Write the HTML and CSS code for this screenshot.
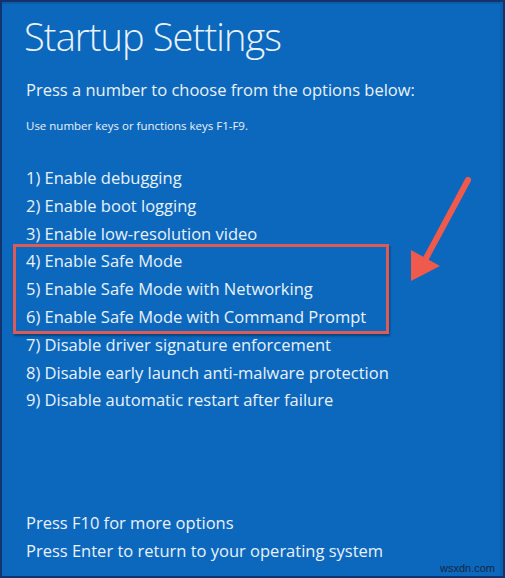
FILE: index.html
```html
<!DOCTYPE html>
<html lang="en">
<head>
    <meta charset="UTF-8">
    <title>Startup Settings</title>
    <link rel="stylesheet" href="styles.css">
</head>
<body>
    <div class="screen">
        <h1 class="title">Startup Settings</h1>
        <p class="lead">Press a number to choose from the options below:</p>
        <p class="hint">Use number keys or functions keys F1-F9.</p>

        <ul class="options">
            <li>1) Enable debugging</li>
            <li>2) Enable boot logging</li>
            <li>3) Enable low-resolution video</li>
            <li class="highlight">
                <ul class="options">
                    <li>4) Enable Safe Mode</li>
                    <li>5) Enable Safe Mode with Networking</li>
                    <li>6) Enable Safe Mode with Command Prompt</li>
                </ul>
            </li>
            <li>7) Disable driver signature enforcement</li>
            <li>8) Disable early launch anti-malware protection</li>
            <li>9) Disable automatic restart after failure</li>
        </ul>

        <div class="footer">
            <p>Press F10 for more options</p>
            <p>Press Enter to return to your operating system</p>
        </div>

        <!-- annotation arrow -->
        <svg class="arrow" width="80" height="120" viewBox="0 0 80 120">
            <line x1="66" y1="8" x2="22" y2="90" stroke="#ef5a4c" stroke-width="6" stroke-linecap="round"/>
            <polygon points="9,109 9,78 38,94" fill="#ef5a4c"/>
        </svg>

        <span class="watermark">wsxdn.com</span>
    </div>
</body>
</html>
```

FILE: styles.css
```css
/* General */
html, body {
    margin: 0;
    padding: 0;
}

body {
    width: 505px;
    height: 578px;
    font-family: 'Open Sans', 'Noto Sans', sans-serif;
    color: #eaf2fb;
}

.screen {
    position: relative;
    box-sizing: border-box;
    width: 505px;
    height: 578px;
    background-color: #0b68bd;
    border: 2px solid #14336e;
    box-shadow: inset -3px 0 0 #0a5fae, inset 0 2px 0 #0d5aa6;
    padding: 6px 22px 12px 22px;
    display: flex;
    flex-direction: column;
}

/* Heading */
.title {
    margin: 0;
    font-size: 38px;
    font-weight: 300;
    letter-spacing: -0.9px;
    line-height: 56px;
}

.lead {
    margin: 14px 0 0 2px;
    font-size: 16.5px;
    line-height: 24px;
}

.hint {
    margin: 16px 0 0 2px;
    font-size: 11.5px;
    line-height: 16px;
}

/* Options list */
.options {
    list-style: none;
    margin: 30px 0 0 2px;
    padding: 0;
    font-size: 16.5px;
    line-height: 27.8px;
}

.options .options {
    margin: 0;
}

.highlight {
    margin: -3px 0 -3px -13px;
    padding-left: 10px;
    width: 360px;
    border: 3px solid #dc5b56;
    box-shadow: 1px 2px 2px rgba(0, 0, 0, 0.35);
}

/* Footer */
.footer {
    margin-top: auto;
    margin-left: 2px;
    font-size: 16.5px;
    line-height: 27.5px;
}

.footer p {
    margin: 0;
}

.arrow {
    position: absolute;
    left: 400px;
    top: 170px;
}

.watermark {
    position: absolute;
    right: 8px;
    bottom: 2px;
    font-family: 'Liberation Sans', sans-serif;
    font-size: 11px;
    color: #1a2540;
}
```
